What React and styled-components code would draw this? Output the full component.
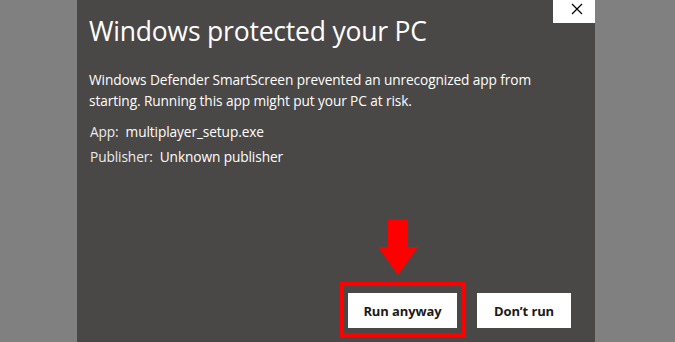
import React from 'react';
import styled, { createGlobalStyle } from 'styled-components';

const Global = createGlobalStyle`
  html, body {
    margin: 0;
    padding: 0;
    background: #808080;
  }
  body {
    font-family: "Open Sans", "Noto Sans", "Liberation Sans", sans-serif;
  }
`;

const Page = styled.div`
  height: 342px;
  width: 675px;
  display: flex;
  padding-left: 77px;
  box-sizing: border-box;
  background: #808080;
  overflow: hidden;
`;

const Dialog = styled.div`
  position: relative;
  width: 518px;
  height: 100%;
  background: #4a4846;
  color: #ffffff;
  display: flex;
  flex-direction: column;
  padding: 12px 24px 14px 12px;
  box-sizing: border-box;
`;

const CloseButton = styled.button`
  position: absolute;
  top: 0;
  right: 0;
  width: 42px;
  height: 23px;
  border: 0;
  background: #ffffff;
  display: flex;
  align-items: center;
  justify-content: center;
  padding: 0;
  padding-left: 6px;
  padding-bottom: 6px;
  cursor: pointer;
`;

const Title = styled.h1`
  margin: 0;
  font-size: 26.5px;
  font-weight: 400;
  line-height: 38px;
  letter-spacing: -0.2px;
  white-space: nowrap;
`;

const Message = styled.p`
  margin: 19px 0 0;
  font-size: 13.7px;
  line-height: 21px;
  width: 470px;
  letter-spacing: -0.1px;
`;

const Details = styled.div`
  margin-top: 10px;
  display: flex;
  flex-direction: column;
  gap: 4px;
  padding-left: 1px;
`;

const DetailRow = styled.div`
  display: flex;
  gap: 7px;
  font-size: 13.7px;
  line-height: 21px;
  letter-spacing: -0.1px;
`;

const Label = styled.span`
  color: #ececec;
`;

const Value = styled.span`
  color: #ffffff;
`;

const Footer = styled.div`
  margin-top: auto;
  display: flex;
  justify-content: flex-end;
  align-items: flex-end;
  gap: 20px;
`;

const Button = styled.button`
  height: 35px;
  width: ${(p) => p.$width}px;
  border: 0;
  background: #ffffff;
  color: #1a1a1a;
  font-family: "Open Sans", "Noto Sans", sans-serif;
  font-weight: 700;
  font-size: 13px;
  letter-spacing: -0.1px;
  padding: 0;
  cursor: pointer;
`;

const Highlight = styled.div`
  position: relative;
  border: 4px solid #ff0000;
  padding: 7px 5px 5px 4px;
  margin: -11px -9px -9px -8px;
`;

const Arrow = styled.svg`
  position: absolute;
  left: 34px;
  top: -67px;
`;

export default function App() {
  return (
    <Page>
      <Global />
      <Dialog>
        <CloseButton aria-label="Close">
          <svg width="12" height="12" viewBox="0 0 12 12">
            <path d="M1 1L11 11M11 1L1 11" stroke="#000" strokeWidth="1.2" fill="none" />
          </svg>
        </CloseButton>
        <Title>Windows protected your PC</Title>
        <Message>
          Windows Defender SmartScreen prevented an unrecognized app from starting. Running this app
          might put your PC at risk.
        </Message>
        <Details>
          <DetailRow>
            <Label>App:</Label>
            <Value>multiplayer_setup.exe</Value>
          </DetailRow>
          <DetailRow>
            <Label>Publisher:</Label>
            <Value>Unknown publisher</Value>
          </DetailRow>
        </Details>
        <Footer>
          <Highlight>
            <Arrow width="40" height="56" viewBox="0 0 40 56">
              <path d="M10 0H30V28H40L20 56L0 28H10Z" fill="#ff0000" />
            </Arrow>
            <Button $width={109}>Run anyway</Button>
          </Highlight>
          <Button $width={94}>Don’t run</Button>
        </Footer>
      </Dialog>
    </Page>
  );
}
